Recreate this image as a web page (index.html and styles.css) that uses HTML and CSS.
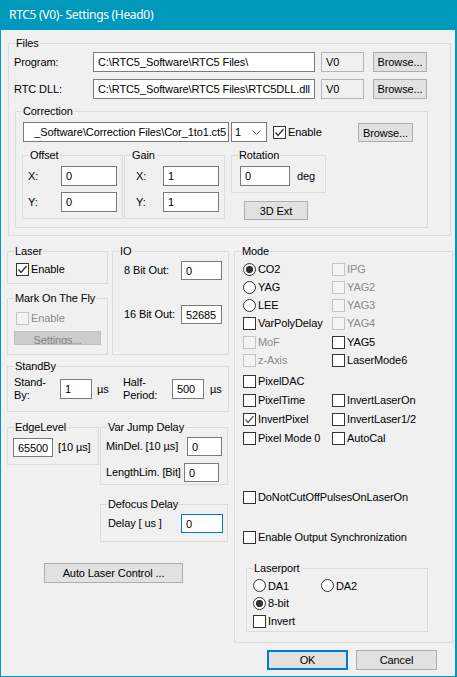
FILE: index.html
```html
<!DOCTYPE html>
<html>
<head>
<meta charset="utf-8">
<title>RTC5 Settings</title>
<link rel="stylesheet" href="styles.css">
</head>
<body>
<div class="window">
  <div class="titlebar">RTC5 (V0)- Settings (Head0)</div>
  <div class="client">
    <div class="group files">
      <span class="legend">Files</span>
      <div class="row file-row first">
        <span class="lbl file-lbl">Program:</span>
        <div class="edit path">C:\RTC5_Software\RTC5 Files\</div>
        <div class="edit ro ver">V0</div>
        <div class="btn browse">Browse...</div>
      </div>
      <div class="row file-row second">
        <span class="lbl file-lbl">RTC DLL:</span>
        <div class="edit path">C:\RTC5_Software\RTC5 Files\RTC5DLL.dll</div>
        <div class="edit ro ver">V0</div>
        <div class="btn browse">Browse...</div>
      </div>
      <div class="group correction">
        <span class="legend">Correction</span>
        <div class="row corr-row">
          <div class="edit corr-file"><span>_Software\Correction Files\Cor_1to1.ct5</span></div>
          <div class="combo"><span>1</span><svg class="chev" width="9" height="5" viewBox="0 0 9 5"><polyline points="0.5,0.5 4.5,4.5 8.5,0.5" fill="none" stroke="#606060" stroke-width="1"/></svg></div>
          <div class="chk corr-enable"><span class="box"><svg width="11" height="11" viewBox="0 0 11 11"><polyline points="1.5,5.5 4,8.5 9.5,2" fill="none" stroke="#333" stroke-width="1.3"/></svg></span>Enable</div>
          <div class="btn corr-browse">Browse...</div>
        </div>
        <div class="row sub-row">
          <div class="group offset">
            <span class="legend">Offset</span>
            <div class="row xy-row first"><span class="lbl off-lbl">X:</span><div class="edit xy">0</div></div>
            <div class="row xy-row second"><span class="lbl off-lbl">Y:</span><div class="edit xy">0</div></div>
          </div>
          <div class="group gain">
            <span class="legend">Gain</span>
            <div class="row xy-row first"><span class="lbl gain-lbl">X:</span><div class="edit xy">1</div></div>
            <div class="row xy-row second"><span class="lbl gain-lbl">Y:</span><div class="edit xy">1</div></div>
          </div>
          <div class="rot-col">
            <div class="group rotation">
              <span class="legend">Rotation</span>
              <div class="row xy-row first"><div class="edit rot">0</div><span class="lbl deg">deg</span></div>
            </div>
            <div class="btn ext">3D Ext</div>
          </div>
        </div>
      </div>
    </div>

    <div class="lower">
      <div class="leftcol">
        <div class="row top-pair">
          <div class="laser-col">
            <div class="group laser">
              <span class="legend">Laser</span>
              <div class="row opt-row laser-opt">
                <div class="chk"><span class="box"><svg width="11" height="11" viewBox="0 0 11 11"><polyline points="1.5,5.5 4,8.5 9.5,2" fill="none" stroke="#333" stroke-width="1.3"/></svg></span>Enable</div>
              </div>
            </div>
            <div class="group motf">
              <span class="legend">Mark On The Fly</span>
              <div class="row opt-row motf-opt">
                <div class="chk disabled"><span class="box"></span>Enable</div>
              </div>
              <div class="btn disabled settings">Settings...</div>
            </div>
          </div>
          <div class="group io">
            <span class="legend">IO</span>
            <div class="row io-row first"><span class="lbl io-lbl">8 Bit Out:</span><div class="edit io-edit">0</div></div>
            <div class="row io-row second"><span class="lbl io-lbl">16 Bit Out:</span><div class="edit io-edit">52685</div></div>
          </div>
        </div>

        <div class="group standby">
          <span class="legend">StandBy</span>
          <div class="row sb-row">
            <span class="lbl two-line sb-lbl1">Stand-<br>By:</span>
            <div class="edit sb-edit">1</div>
            <span class="lbl unit1">µs</span>
            <span class="lbl two-line sb-lbl2">Half-<br>Period:</span>
            <div class="edit sb-edit">500</div>
            <span class="lbl unit2">µs</span>
          </div>
        </div>

        <div class="row edge-pair">
          <div class="group edge">
            <span class="legend">EdgeLevel</span>
            <div class="row edge-row"><div class="edit edge-edit">65500</div><span class="lbl edge-unit">[10 µs]</span></div>
          </div>
          <div class="delay-col">
            <div class="group varjump">
              <span class="legend">Var Jump Delay</span>
              <div class="row vj-row first"><span class="lbl vj-lbl1">MinDel. [10 µs]</span><div class="edit vj-edit">0</div></div>
              <div class="row vj-row second"><span class="lbl vj-lbl2">LengthLim. [Bit]</span><div class="edit vj-edit">0</div></div>
            </div>
            <div class="group defocus">
              <span class="legend">Defocus Delay</span>
              <div class="row df-row"><span class="lbl df-lbl">Delay [ us ]</span><div class="edit df-edit focus">0</div></div>
            </div>
          </div>
        </div>

        <div class="btn auto">Auto Laser Control ...</div>
      </div>

      <div class="group mode">
        <span class="legend">Mode</span>
        <div class="row mrow m1">
          <div class="cell1 chk"><span class="radio on"></span>CO2</div>
          <div class="chk disabled"><span class="box"></span>IPG</div>
        </div>
        <div class="row mrow m2">
          <div class="cell1 chk"><span class="radio"></span>YAG</div>
          <div class="chk disabled"><span class="box"></span>YAG2</div>
        </div>
        <div class="row mrow m3">
          <div class="cell1 chk"><span class="radio"></span>LEE</div>
          <div class="chk disabled"><span class="box"></span>YAG3</div>
        </div>
        <div class="row mrow m4">
          <div class="cell1 chk"><span class="box"></span>VarPolyDelay</div>
          <div class="chk disabled"><span class="box"></span>YAG4</div>
        </div>
        <div class="row mrow m5">
          <div class="cell1 chk disabled"><span class="box"></span>MoF</div>
          <div class="chk"><span class="box"></span>YAG5</div>
        </div>
        <div class="row mrow m6">
          <div class="cell1 chk disabled"><span class="box"></span>z-Axis</div>
          <div class="chk"><span class="box"></span>LaserMode6</div>
        </div>
        <div class="row mrow m7">
          <div class="cell1 chk"><span class="box"></span>PixelDAC</div>
        </div>
        <div class="row mrow m8">
          <div class="cell1 chk"><span class="box"></span>PixelTime</div>
          <div class="chk"><span class="box"></span>InvertLaserOn</div>
        </div>
        <div class="row mrow m9">
          <div class="cell1 chk"><span class="box"><svg width="11" height="11" viewBox="0 0 11 11"><polyline points="1.5,5.5 4,8.5 9.5,2" fill="none" stroke="#555" stroke-width="1.2"/></svg></span>InvertPixel</div>
          <div class="chk"><span class="box"></span>InvertLaser1/2</div>
        </div>
        <div class="row mrow m10">
          <div class="cell1 chk"><span class="box"></span>Pixel Mode 0</div>
          <div class="chk"><span class="box"></span>AutoCal</div>
        </div>
        <div class="row mrow m11">
          <div class="cell1 chk"><span class="box"></span>DoNotCutOffPulsesOnLaserOn</div>
        </div>
        <div class="row mrow m12">
          <div class="cell1 chk"><span class="box"></span>Enable Output Synchronization</div>
        </div>
        <div class="group laserport">
          <span class="legend">Laserport</span>
          <div class="row lprow l1">
            <div class="lpcell chk"><span class="radio"></span>DA1</div>
            <div class="chk"><span class="radio"></span>DA2</div>
          </div>
          <div class="row lprow l2">
            <div class="lpcell chk"><span class="radio on"></span>8-bit</div>
          </div>
          <div class="row lprow l3">
            <div class="lpcell chk"><span class="box"></span>Invert</div>
          </div>
        </div>
      </div>
    </div>

    <div class="buttons">
      <div class="btn default dlg">OK</div>
      <div class="btn dlg">Cancel</div>
    </div>
  </div>
</div>
</body>
</html>
```

FILE: styles.css
```css
html, body {
  margin: 0;
  padding: 0;
  background: #F0F0F0;
}

.window {
  box-sizing: border-box;
  width: 457px;
  height: 677px;
  border-left: 1px solid #0099BC;
  border-right: 2px solid #0099BC;
  border-bottom: 1px solid #0099BC;
  background: #F0F0F0;
  font-family: "Liberation Sans", Arial, sans-serif;
  font-size: 11px;
  letter-spacing: -0.1px;
  color: #000;
  display: flex;
  flex-direction: column;
  overflow: hidden;
}

.titlebar {
  height: 30px;
  flex: none;
  background: #0099BC;
  color: #fff;
  font-family: "Noto Sans", "Open Sans", sans-serif;
  font-size: 12px;
  letter-spacing: -0.3px;
  line-height: 30px;
  padding-left: 8px;
  white-space: nowrap;
}

.client {
  flex: 1;
  display: flex;
  flex-direction: column;
}

/* ---------- generic controls ---------- */
.row {
  display: flex;
  align-items: center;
  flex: none;
}

.lbl {
  white-space: nowrap;
  flex: none;
  line-height: 13px;
}

.two-line {
  white-space: normal;
  line-height: 13px;
}

.group {
  box-sizing: border-box;
  border: 1px solid #DCDCDC;
  flex: none;
}

.legend {
  display: block;
  width: fit-content;
  height: 14px;
  line-height: 14px;
  margin: -8px 0 0 6px;
  padding: 0 1px;
  background: #F0F0F0;
  white-space: nowrap;
}

.edit {
  box-sizing: border-box;
  height: 20px;
  border: 1px solid #7A7A7A;
  background: #fff;
  padding: 0 4px;
  display: flex;
  align-items: center;
  white-space: nowrap;
  overflow: hidden;
  flex: none;
}

.edit.ro {
  background: #F0F0F0;
  border-color: #B4B4B4;
}

.edit.focus {
  border-color: #0078D7;
}

.btn {
  box-sizing: border-box;
  height: 20px;
  border: 1px solid #ADADAD;
  background: #E1E1E1;
  display: flex;
  align-items: center;
  justify-content: center;
  white-space: nowrap;
  flex: none;
}

.btn.disabled {
  background: #CCCCCC;
  border-color: #BFBFBF;
  color: #838383;
}

.btn.default {
  border: 2px solid #0078D7;
}

.chk {
  display: flex;
  align-items: center;
  white-space: nowrap;
  flex: none;
}

.box {
  box-sizing: border-box;
  width: 13px;
  height: 13px;
  border: 1px solid #333;
  background: #fff;
  margin-right: 2px;
  flex: none;
  display: flex;
  align-items: center;
  justify-content: center;
}

.chk.disabled {
  color: #8A8A8A;
}

.chk.disabled .box {
  border-color: #C4C4C4;
  background: #F4F4F4;
}

.radio {
  box-sizing: border-box;
  width: 13px;
  height: 13px;
  border: 1px solid #333;
  border-radius: 50%;
  background: #fff;
  margin-right: 2px;
  flex: none;
}

.radio.on {
  background: radial-gradient(circle, #333 0 3.4px, #fff 3.9px);
}

/* ---------- Files ---------- */
.files {
  margin: 13px 0 0 7px;
  width: 443px;
  height: 193px;
}

.file-row { height: 20px; }
.file-row.first { margin-top: 2px; }
.file-row.second { margin-top: 7px; }

.file-lbl {
  width: 79px;
  margin-left: 5px;
}

.path { width: 222px; }
.ver { width: 43px; margin-left: 6px; }
.browse { width: 54px; margin-left: 9px; }

.correction {
  margin: 12px 0 0 6px;
  width: 413px;
  height: 117px;
}

.corr-row {
  margin-top: 4px;
  height: 20px;
}

.corr-file {
  width: 206px;
  margin-left: 7px;
  justify-content: flex-end;
  padding: 0 2px 0 1px;
}

.combo {
  box-sizing: border-box;
  width: 36px;
  height: 20px;
  margin-left: 2px;
  border: 1px solid #7A7A7A;
  background: #fff;
  display: flex;
  align-items: center;
  justify-content: space-between;
  padding: 0 5px 0 3px;
  flex: none;
}

.chev { display: block; }

.corr-enable { margin-left: 6px; }

.corr-browse {
  width: 55px;
  height: 19px;
  margin-left: auto;
  margin-right: 14px;
  align-self: flex-start;
  margin-top: 1px;
}

.sub-row {
  margin-top: 13px;
  align-items: flex-start;
}

.offset { width: 101px; height: 64px; margin-left: 6px; }
.gain { width: 101px; height: 64px; margin-left: 1px; }

.xy-row { height: 20px; }
.xy-row.first { margin-top: 4px; }
.xy-row.second { margin-top: 6px; }

.off-lbl { margin-left: 5px; width: 33px; }
.gain-lbl { margin-left: 11px; width: 27px; }
.xy { width: 56px; }

.rot-col {
  margin-left: 6px;
  display: flex;
  flex-direction: column;
}

.rotation { width: 95px; height: 38px; }
.rot { width: 50px; margin-left: 8px; }
.deg { margin-left: 7px; }

.ext {
  width: 64px;
  height: 19px;
  margin: 8px 0 0 13px;
}

/* ---------- lower section ---------- */
.lower {
  display: flex;
  align-items: flex-start;
  margin-top: 15px;
  flex: none;
}

.leftcol {
  width: 222px;
  margin-left: 6px;
  display: flex;
  flex-direction: column;
}

.top-pair { align-items: flex-start; }

.laser-col {
  width: 101px;
  display: flex;
  flex-direction: column;
}

.laser { width: 101px; height: 33px; }
.motf { width: 101px; height: 57px; margin-top: 14px; }

.opt-row { height: 18px; }
.laser-opt { margin-top: 2px; padding-left: 8px; }
.motf-opt { margin-top: 4px; padding-left: 8px; }

.settings {
  width: 87px;
  height: 14px;
  margin: 4px 0 0 6px;
  overflow: hidden;
  align-items: flex-start;
  line-height: 13px;
  padding-top: 2px;
}

.io {
  width: 117px;
  height: 104px;
  margin-left: 4px;
}

.io-row { height: 19px; }
.io-row.first { margin-top: 3px; }
.io-row.second { margin-top: 25px; }
.io-lbl { margin-left: 11px; width: 57px; }
.io-edit { width: 41px; height: 19px; }

.standby {
  width: 222px;
  height: 46px;
  margin-top: 11px;
}

.sb-row {
  height: 20px;
  margin-top: 6px;
}

.sb-lbl1 { margin-left: 6px; width: 46px; }
.sb-edit { width: 32px; }
.unit1 { margin-left: 5px; width: 26px; }
.sb-lbl2 { width: 49px; }
.unit2 { margin-left: 6px; }

.edge-pair {
  margin-top: 15px;
  align-items: flex-start;
}

.edge { width: 92px; height: 38px; }
.edge-row { height: 19px; margin-top: 4px; }
.edge-edit { width: 40px; height: 19px; margin-left: 5px; }
.edge-unit { margin-left: 5px; }

.delay-col {
  width: 128px;
  margin-left: 1px;
  display: flex;
  flex-direction: column;
}

.varjump { width: 128px; height: 58px; }
.vj-row { height: 19px; }
.vj-row.first { margin-top: 3px; }
.vj-row.second { margin-top: 7px; }
.vj-lbl1 { margin-left: 5px; width: 81px; }
.vj-lbl2 { margin-left: 5px; width: 78px; }
.vj-edit { width: 35px; height: 19px; }

.defocus { width: 128px; height: 38px; margin-top: 19px; }
.df-row { height: 19px; margin-top: 3px; }
.df-lbl { margin-left: 7px; width: 73px; }
.df-edit { width: 42px; height: 19px; }

.auto {
  width: 139px;
  height: 20px;
  margin: 21px 0 0 37px;
}

/* ---------- Mode ---------- */
.mode {
  width: 219px;
  height: 392px;
  margin-left: 5px;
}

.mrow { height: 18px; }
.m1 { margin-top: 2px; }
.m5 { margin-top: 1px; }
.m7 { margin-top: 3px; }
.m8 { margin-top: 1px; }
.m9 { margin-top: 1px; }
.m10 { margin-top: 1px; }
.m11 { margin-top: 41px; }
.m12 { margin-top: 22px; }

.cell1 {
  width: 89px;
  margin-left: 8px;
}

.laserport {
  width: 182px;
  height: 64px;
  margin: 22px 0 0 11px;
}

.lprow { height: 18px; }
.l1 { margin-top: 2px; height: 17px; }

.lpcell {
  width: 68px;
  margin-left: 6px;
}

/* ---------- dialog buttons ---------- */
.buttons {
  display: flex;
  justify-content: flex-end;
  margin: 7px 18px 0 0;
  gap: 8px;
}

.dlg {
  width: 81px;
  height: 20px;
}
```
